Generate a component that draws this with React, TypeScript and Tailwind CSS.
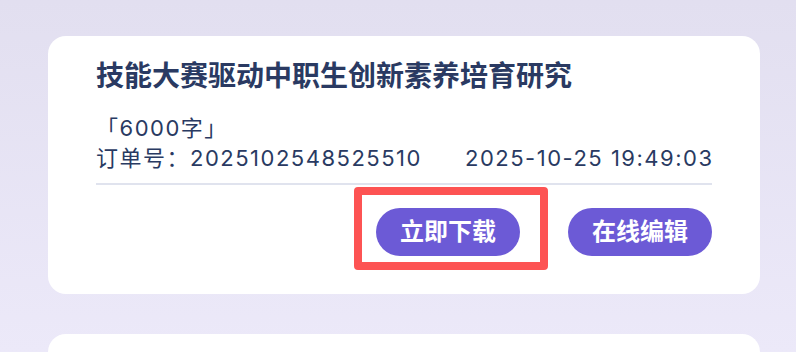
import React from 'react';

const font = { fontFamily: 'Inter, "Noto Sans CJK SC", sans-serif' };

export default function App() {
  return (
    <div
      className="h-[352px] w-[796px] overflow-hidden bg-gradient-to-b from-[#e2dff0] to-[#ece9f9] pl-[48px] pr-[36px] pt-[36px]"
      style={font}
    >
      {/* Order card */}
      <div className="rounded-[18px] bg-white px-[48px] pb-[38px] pt-[21px]">
        <h2 className="text-[28px] font-bold leading-[38px] text-[#2a3a62]">
          技能大赛驱动中职生创新素养培育研究
        </h2>
        <div className="mt-[18px] text-[22px] leading-[30px] tracking-[1.5px] text-[#293a62]">
          <p>「6000字」</p>
          <div className="flex items-center justify-between">
            <span>订单号：2025102548525510</span>
            <span className="-mr-[1.5px]">2025-10-25 19:49:03</span>
          </div>
        </div>
        <div className="mt-[10px] h-[2px] bg-[#e0e3ee]" />

        <div className="mt-[23px] flex justify-end gap-[48px]">
          <div className="relative">
            <button className="h-[48px] w-[144px] rounded-full bg-[#6c5ad6] text-[24px] font-bold text-white">
              立即下载
            </button>
            {/* highlight annotation */}
            <div className="pointer-events-none absolute -left-[22px] -right-[28px] -top-[21px] -bottom-[14px] rounded-[4px] border-[8px] border-[#fd5353]" />
          </div>
          <button className="h-[48px] w-[144px] rounded-full bg-[#6c5ad6] text-[24px] font-bold text-white">
            在线编辑
          </button>
        </div>
      </div>

      <div className="mt-[40px] h-[60px] rounded-[18px] bg-white" />
    </div>
  );
}
